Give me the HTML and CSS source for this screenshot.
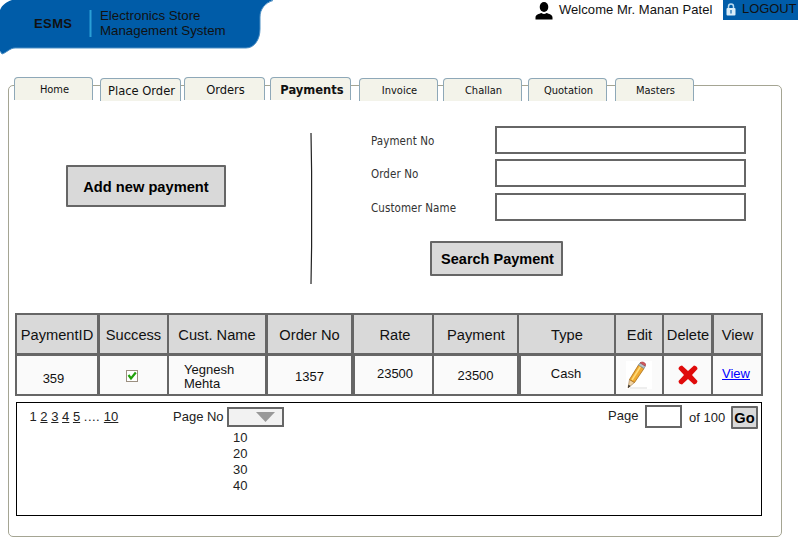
FILE: index.html
```html
<!DOCTYPE html>
<html lang="en">
<head>
<meta charset="utf-8">
<title>ESMS - Payments</title>
<link rel="stylesheet" href="styles.css">
</head>
<body>
<header class="top">
  <div class="brand">
    <svg class="brand-bg" width="280" height="56" viewBox="0 0 280 56" aria-hidden="true">
      <path d="M12 0H273C265 3 260 9 260 17V29C260 40 254 48 246 48H15C10 48 6 53 2 54L0 51V10C2 5 6 2 12 0Z" fill="#005ca8"/>
      <path d="M0 51L2 54C6 53 10 48 15 48H246C254 48 260 40 260 29V17C260 9 265 3 273 .5" fill="none" stroke="#4d8fc4" stroke-width="1"/>
      <path d="M90.500 10V37" stroke="#2a9fd6" stroke-width="2"/>
    </svg>
    <span class="logo">ESMS</span>
    <span class="tagline">Electronics Store<br>Management System</span>
  </div>
  <div class="account">
    <svg class="user" width="18" height="18" viewBox="0 0 18 18" aria-hidden="true"><ellipse cx="9" cy="5" rx="4.300" ry="5"/><path d="M.5 17.500V15.500C.5 12.500 4 12 6.500 11Q9 13 11.500 11C14 12 17.500 12.500 17.500 15.500V17.500Z"/></svg>
    <span class="welcome">Welcome Mr. Manan Patel</span>
    <a class="logout"><svg width="10" height="13" viewBox="0 0 10 13" aria-hidden="true"><path d="M2.500 6V3.500Q2.500 1 5 1T7.500 3.500V6" fill="none" stroke="#b9dcf2" stroke-width="1.500"/><rect x=".5" y="5" width="9" height="7.500" rx="1" fill="#d9edf8"/><path d="M5 7V10.500" stroke="#3b83bd" stroke-width="1.500"/></svg>LOGOUT</a>
  </div>
</header>

<nav class="tabs">
  <a class="tab home">Home</a>
  <a class="tab place low big">Place Order</a>
  <a class="tab orders big">Orders</a>
  <a class="tab payments big active">Payments</a>
  <a class="tab invoice low">Invoice</a>
  <a class="tab challan low">Challan</a>
  <a class="tab quotation low">Quotation</a>
  <a class="tab masters low">Masters</a>
</nav>

<main class="panel">
  <section class="tools">
    <button class="btn add">Add new payment</button>
    <svg class="divider" width="4" height="151" viewBox="0 0 4 151" aria-hidden="true"><path d="M1 0L1.600 38V114L1 151" fill="none" stroke="#222" stroke-width="1.200"/></svg>
    <form class="search">
      <label class="field"><span>Payment No</span><input type="text"></label>
      <label class="field"><span>Order No</span><input type="text"></label>
      <label class="field last"><span>Customer Name</span><input type="text"></label>
      <button class="btn find" type="button">Search Payment</button>
    </form>
  </section>

  <section class="grid">
    <div class="cell head">PaymentID</div>
    <div class="cell head wide">Success</div>
    <div class="cell head">Cust. Name</div>
    <div class="cell head wide">Order No</div>
    <div class="cell head wide rate-head">Rate</div>
    <div class="cell head nudge">Payment</div>
    <div class="cell head nudge">Type</div>
    <div class="cell head nudge">Edit</div>
    <div class="cell head nudge">Delete</div>
    <div class="cell head wide">View</div>

    <div class="cell id">359</div>
    <div class="cell wide check"><svg width="12" height="12" viewBox="0 0 12 12" aria-hidden="true"><rect x=".5" y=".5" width="11" height="11" fill="#fff" stroke="#9b8f80"/><path d="M2.500 5L5 8.500L9.800 2.500" fill="none" stroke="#21a10a" stroke-width="2.200"/></svg></div>
    <div class="cell customer">Yegnesh<br>Mehta</div>
    <div class="cell wide order">1357</div>
    <div class="cell wider rate">23500</div>
    <div class="cell amount">23500</div>
    <div class="cell wider type">Cash</div>
    <div class="cell edit"><svg width="26" height="28" viewBox="0 0 26 28" aria-hidden="true"><rect width="26" height="28" fill="#fff"/><path d="M4 27H21" stroke="#ddd"/><path d="M2 27L3.500 18.500L8.500 21.500Z" fill="#f1d5a7" stroke="#9a7444" stroke-width=".6"/><path d="M2 27L2.500 23.800L4.500 25Z" fill="#222"/><path d="M3.500 18.500L12.500 4L18 7.500L8.500 21.500Z" fill="#efaa32" stroke="#a96d18" stroke-width=".8"/><path d="M6 19L14.500 5.500" stroke="#ffdb79" stroke-width="1.500"/><path d="M12.500 4L14 1.800L19.300 5L18 7.500Z" fill="#b9c5cb" stroke="#7d8a91" stroke-width=".7"/><path d="M14 1.800Q16 .2 18.200 1.500T19.300 5Z" fill="#d5575d" stroke="#a3373d" stroke-width=".6"/></svg></div>
    <div class="cell delete"><svg width="20" height="20" viewBox="0 0 20 20" aria-hidden="true"><path d="M4 .5L10 6L16 .5Q19.500 1 19.500 4L14 10L19.500 16Q19 19 16 19.500L10 14L4 19.500Q.5 19 .5 16L6 10L.5 4Q.5 1 4 .5Z" fill="#e00b0b"/></svg></div>
    <div class="cell view"><a>View</a></div>
  </section>

  <section class="pager">
    <div class="pages">1 <u>2</u> <u>3</u> <u>4</u> <u>5</u> <span class="dots">....</span> <u>10</u></div>
    <div class="size-label">Page No</div>
    <div class="size">
      <div class="select"><svg width="19" height="10" viewBox="0 0 19 10" aria-hidden="true"><path d="M0 0H19L9.500 10Z" fill="#999"/></svg></div>
      <div class="options"><span>10</span><span>20</span><span>30</span><span>40</span></div>
    </div>
    <div class="jump-label">Page</div>
    <input class="jump" type="text">
    <div class="total">of 100</div>
    <button class="btn go">Go</button>
  </section>
</main>
</body>
</html>
```
FILE: styles.css
```css
* { box-sizing: border-box; }

body {
  margin: 0;
  width: 800px;
  height: 550px;
  overflow: hidden;
  background: #fff;
  color: #111;
  font: 13px/15px "Liberation Sans", Arial, sans-serif;
}

svg { display: block; flex: none; }

.top { display: flex; justify-content: space-between; height: 77px; padding-right: 2px; }
.brand { position: relative; display: flex; width: 280px; height: 56px; }
.brand-bg { position: absolute; left: 0; top: 0; }
.logo { position: relative; margin: 16px 0 0 34px; width: 66px; font-weight: bold; letter-spacing: .4px; }
.tagline { position: relative; padding-top: 8px; font-size: 13.3px; white-space: nowrap; }

.account { display: flex; align-items: flex-start; white-space: nowrap; }
.user { margin: 2px 6px 0 0; }
.welcome { width: 164px; padding-top: 2px; letter-spacing: .05px; }
.logout { display: flex; gap: 6px; width: 75px; height: 20px; padding: 1px 0 0 3px; background: #005ca8; overflow: hidden; letter-spacing: -.1px; }
.logout svg { margin-top: 2px; }

.tabs { position: relative; z-index: 1; display: flex; align-items: flex-start; height: 24px; margin-bottom: -16px; padding-left: 14px; font: 11px/23px "DejaVu Sans Condensed", "DejaVu Sans", sans-serif; font-stretch: condensed; }
.tab { width: 79px; height: 23px; border: 1px solid #8ea8b8; border-bottom: 0; border-radius: 4px 4px 0 0; background: #f3f3ea; text-align: center; white-space: nowrap; padding-left: 2px; }
.low { margin-top: 1px; }
.big { width: 81px; font-size: 12.8px; }
.place { margin-left: 7px; }
.orders { margin-left: 3px; }
.payments { margin-left: 5px; }
.invoice { margin-left: 8px; }
.challan { margin-left: 5px; }
.quotation { margin-left: 6px; }
.masters { margin-left: 8px; }
.active { font-weight: bold; padding-left: 3px; }

.panel { width: 774px; height: 452px; margin-left: 8px; padding-left: 6px; border: 1px solid #a5a593; border-radius: 5px; }

.tools { display: flex; align-items: flex-start; height: 227px; }
.btn { border: 2px solid #666; border-radius: 1px; background: #d9d9d9; color: #000; padding: 0; font: bold 14.67px "Liberation Sans", Arial, sans-serif; white-space: nowrap; }
.add { width: 160px; height: 42px; margin: 79px 84px 0 51px; padding-top: 2px; }
.divider { margin: 47px 57px 0 0; }
.search { width: 375px; padding-top: 40px; }
.field { display: flex; height: 33px; font: 11.5px/31px "DejaVu Sans Condensed", "DejaVu Sans", sans-serif; font-stretch: condensed; letter-spacing: .08px; color: #333; }
.field span { width: 124px; }
.field input { width: 251px; height: 28px; }
.last { padding-top: 1px; height: 34px; }
input { border: 2px solid #666; background: #fff; padding: 2px; border-radius: 0; }
.find { display: block; width: 133px; height: 35px; margin: 15px 0 0 59px; padding-left: 2px; font-size: 14.5px; }

.grid { display: grid; grid-template-columns: 80px 68px 96px 84px 79px 83px 95px 46px 47px 48px; grid-template-rows: 38px 38px; column-gap: 2px; row-gap: 3px; width: 748px; height: 83px; padding: 2px; background: #666; }
.cell { display: flex; align-items: flex-start; justify-content: center; background: #fafafa; white-space: nowrap; line-height: 14px; }
.head { align-items: center; padding-top: 3px; background: #d9d9d9; font-size: 14.67px; line-height: 17px; }
.nudge { padding-left: 1px; }
.rate-head { padding-left: 4px; }
.wide { margin-left: 1px; }
.wider { margin-left: 2px; }
.id { padding: 16px 7px 0 0; }
.check { padding: 14px 3px 0 0; }
.customer { justify-content: flex-start; padding: 7px 0 0 15px; }
.order { padding-top: 14px; }
.rate { padding: 11px 0 0 3px; }
.amount { padding-top: 13px; }
.type { padding: 11px 3px 0 0; }
.edit { padding: 5px 0 0 0; }
.delete { padding-top: 9px; }
.view { padding: 11px 2px 0 0; }
.view a { color: #00f; text-decoration: underline; }

.pager { display: flex; align-items: flex-start; width: 746px; height: 114px; margin: 6px 0 0 1px; border: 1px solid #000; white-space: nowrap; color: #222; }
.pages { width: 156px; padding: 6px 0 0 12.5px; }
.dots { letter-spacing: .5px; }
.size-label { width: 54px; padding-top: 6px; }
.size { width: 57px; margin-right: 324px; padding-top: 4px; }
.select { width: 57px; height: 20px; padding: 3px 0 0 27px; border: 2px solid #666; background: #f2f2f2; }
.options { display: flex; flex-direction: column; padding: 2.5px 0 0 6px; line-height: 16.300px; }
.jump-label { width: 37px; padding-top: 5px; }
.jump { width: 37px; height: 23px; margin: 2px 7px 0 0; }
.total { width: 42px; padding-top: 7px; }
.go { width: 27px; height: 23px; margin-top: 3px; }
```
